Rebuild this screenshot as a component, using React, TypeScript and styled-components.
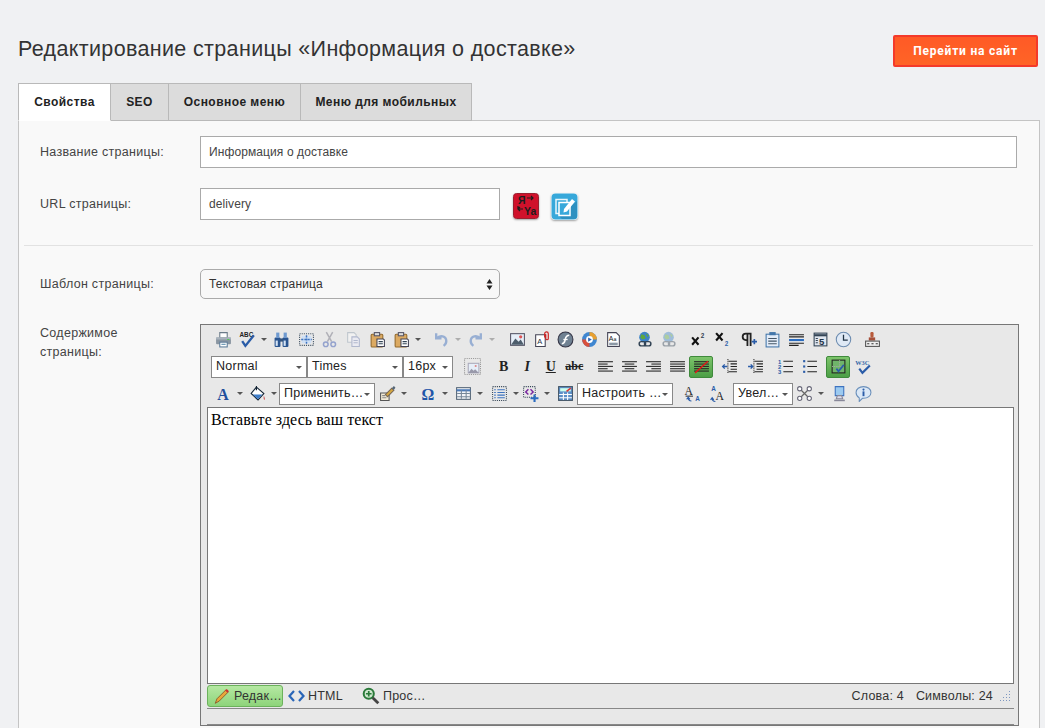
import React from 'react';
import styled, { createGlobalStyle } from 'styled-components';

const Global = createGlobalStyle`
  html, body { margin: 0; padding: 0; height: 100%; overflow: hidden; background: #f0f1f3; }
  body { font-family: "Liberation Sans", Arial, sans-serif; color: #333; }
  #root { height: 100%; }
`;

const Page = styled.div`
  height: 100vh;
  box-sizing: border-box;
  padding: 35px 5px 0 18px;
  display: flex;
  flex-direction: column;
  overflow: hidden;
`;

const Header = styled.header`
  display: flex;
  align-items: flex-start;
  justify-content: space-between;
  height: 48px;
  padding-right: 2px;
  flex-shrink: 0;
`;

const Title = styled.h1`
  margin: 0;
  font-size: 21.5px;
  line-height: 28px;
  font-weight: 400;
  letter-spacing: 0.35px;
  color: #333;
`;

const GoButton = styled.a`
  display: flex;
  align-items: center;
  justify-content: center;
  width: 145px;
  height: 32px;
  box-sizing: border-box;
  background: linear-gradient(#ff5a26, #ff6426);
  border: 2px solid #f43a2a;
  border-radius: 2px;
  color: #fff;
  font-family: Roboto, "Liberation Sans", sans-serif;
  font-size: 12px;
  font-weight: 700;
  letter-spacing: 0.8px;
`;

const Tabs = styled.nav`
  display: flex;
  height: 38px;
  flex-shrink: 0;
  position: relative;
  z-index: 1;
  margin-bottom: -1px;
`;

const Tab = styled.div<{ $active?: boolean; $w: number }>`
  width: ${p => p.$w}px;
  box-sizing: border-box;
  display: flex;
  align-items: center;
  justify-content: center;
  border: 1px solid #b9b9b9;
  border-left-width: ${p => (p.$active ? 1 : 0)}px;
  border-bottom-color: ${p => (p.$active ? '#fff' : '#b9b9b9')};
  background: ${p => (p.$active ? '#fff' : '#dcdcdc')};
  font-size: 12px;
  font-weight: 700;
  letter-spacing: 0.45px;
  color: #222;
`;

const Panel = styled.main`
  flex: 1;
  background: #f9f9f9;
  border: 1px solid #c4c4c4;
  border-bottom: 0;
  padding: 15px 6px 0 5px;
  min-height: 0;
`;

const Row = styled.div<{ $mb: number; $center?: boolean }>`
  display: flex;
  align-items: ${p => (p.$center ? 'center' : 'flex-start')};
  padding-left: 16px;
  margin-bottom: ${p => p.$mb}px;
`;

const Label = styled.label`
  width: 160px;
  flex-shrink: 0;
  font-size: 12.5px;
  line-height: 19px;
  letter-spacing: 0.3px;
  color: #444;
`;

const LabelText = styled.span`
  display: block;
  width: 110px;
`;

const Field = styled.input<{ $w: number }>`
  width: ${p => p.$w}px;
  height: 32px;
  box-sizing: border-box;
  border: 1px solid #aaa;
  background: #fff;
  padding: 0 8px;
  font-family: inherit;
  font-size: 12px;
  letter-spacing: 0.1px;
  color: #444;
  outline: none;
`;

const IconLink = styled.span<{ $ml: number }>`
  display: flex;
  margin-left: ${p => p.$ml}px;
  margin-top: 4px;
  border-radius: 4px;
  box-shadow: 0 1px 2px rgba(0, 0, 0, 0.35);
`;

const Divider = styled.hr`
  border: 0;
  border-top: 1px solid #e2e2e2;
  margin: 0 0 23px 0;
`;

const SelectBox = styled.div`
  width: 300px;
  height: 30px;
  box-sizing: border-box;
  display: flex;
  align-items: center;
  justify-content: space-between;
  padding: 0 6px 0 8px;
  border: 1px solid #aaa;
  border-radius: 5px;
  background: #f8f8f8;
  font-size: 12px;
  letter-spacing: 0.15px;
  color: #333;
`;

const Editor = styled.div`
  width: 819px;
  height: 402px;
  box-sizing: border-box;
  border: 1px solid #777;
  background: #e8e8e8;
  padding: 0 4px 1px 6px;
  display: flex;
  flex-direction: column;
  flex-shrink: 0;
`;

const ToolRow = styled.div`
  display: flex;
  align-items: center;
  height: 27px;
  flex-shrink: 0;
`;

const ToolRows = styled.div`
  padding: 1px 0 0 4px;
  height: 81px;
  flex-shrink: 0;
`;

const ToolBtn = styled.span<{ $ml?: number; $on?: boolean; $off?: boolean }>`
  width: 24px;
  height: 22px;
  box-sizing: border-box;
  display: flex;
  align-items: center;
  justify-content: center;
  flex-shrink: 0;
  margin-left: ${p => p.$ml || 0}px;
  opacity: ${p => (p.$off ? 0.42 : 1)};
  border-radius: 2px;
  ${p => p.$on && 'background: linear-gradient(#7cc46a, #4c9f46); border: 1px solid #3f8a3c;'}
`;

const Drop = styled.span<{ $off?: boolean }>`
  width: 10px;
  height: 22px;
  flex-shrink: 0;
  display: flex;
  align-items: center;
  justify-content: center;
  opacity: ${p => (p.$off ? 0.4 : 1)};
  &::after {
    content: '';
    border: 3px solid transparent;
    border-top: 3px solid #555;
    border-bottom: 0;
  }
`;

const ToolSelect = styled.span<{ $w: number; $ml?: number }>`
  width: ${p => p.$w}px;
  height: 22px;
  box-sizing: border-box;
  margin-left: ${p => p.$ml || 0}px;
  flex-shrink: 0;
  display: flex;
  align-items: center;
  justify-content: space-between;
  padding: 0 4px 2px;
  background: #fff;
  border: 1px solid #888;
  font-size: 12.5px;
  letter-spacing: 0.25px;
  color: #222;
  white-space: nowrap;
  &::after {
    content: '';
    flex-shrink: 0;
    border: 3px solid transparent;
    border-top: 3px solid #555;
    border-bottom: 0;
    margin-top: 3px;
  }
`;

const Content = styled.div`
  height: 277px;
  box-sizing: border-box;
  flex-shrink: 0;
  background: #fff;
  border: 1px solid #777;
  padding: 3px 3px;
  font-family: "Liberation Serif", "Times New Roman", serif;
  font-size: 16px;
  line-height: 18px;
  letter-spacing: 0.05px;
  color: #000;
`;

const StatusBar = styled.div`
  height: 25px;
  flex-shrink: 0;
  box-sizing: border-box;
  border-bottom: 1px solid #888;
  display: flex;
  align-items: center;
  justify-content: space-between;
  font-size: 12.5px;
  letter-spacing: 0.2px;
  color: #333;
`;

const Modes = styled.div`
  display: flex;
  align-items: center;
  height: 100%;
`;

const Mode = styled.span<{ $w: number; $on?: boolean; $pl?: number }>`
  width: ${p => p.$w}px;
  height: 22px;
  box-sizing: border-box;
  display: flex;
  align-items: center;
  gap: 3px;
  padding-left: ${p => p.$pl ?? 5}px;
  border-radius: 3px;
  white-space: nowrap;
  ${p => p.$on && 'background: linear-gradient(#b5e8a2, #8ed47b); border: 1px solid #6cb25c;'}
`;

const Counts = styled.div`
  display: flex;
  align-items: center;
  gap: 12px;
  padding-right: 3px;
`;

const Grip = styled.span`
  width: 12px;
  height: 12px;
  display: flex;
  margin-left: -6px;
`;

const BottomStrip = styled.div`
  height: 15px;
  flex-shrink: 0;
  border-bottom: 1px solid #888;
`;

const FaceBtn = styled.span<{ $i?: boolean; $u?: boolean; $s?: boolean; $ml?: number }>`
  width: 23.5px;
  height: 22px;
  flex-shrink: 0;
  display: flex;
  align-items: center;
  justify-content: center;
  margin-left: ${p => p.$ml || 0}px;
  font-family: "Liberation Serif", serif;
  font-size: ${p => (p.$s ? 12 : 14)}px;
  font-weight: 700;
  font-style: ${p => (p.$i ? 'italic' : 'normal')};
  text-decoration: ${p => (p.$u ? 'underline' : p.$s ? 'line-through' : 'none')};
  color: #222;
`;

const I = ({ children, s = 17 }: { children: React.ReactNode; s?: number }) => (
  <svg width={s} height={s} viewBox="0 0 16 16" fill="none">{children}</svg>
);

const lines = (ys: [number, number][], y0: number, step: number, c = '#222') =>
  ys.map(([a, b], i) => <path key={i} d={`M${a} ${y0 + i * step + 0.5}H${b}`} stroke={c} />);

const icons: Record<string, React.ReactNode> = {
  print: <><path d="M4.5 1.5h7v5h-7z" fill="#fff" stroke="#6a7a88" /><rect x="1" y="6" width="14" height="6.5" rx="1" fill="#8a96a2" /><rect x="1" y="6" width="14" height="2" fill="#a9b3bd" /><rect x="4.5" y="10.5" width="7" height="4.5" fill="#fff" stroke="#5a7a98" /><path d="M6 12.500h4" stroke="#58a" /><rect x="11.5" y="7.5" width="2" height="1" fill="#5c5" /></>,
  spell: <><text x="0.500" y="6" fontSize="6" fontWeight="700" fill="#222" fontFamily="Liberation Sans">ABC</text><path d="M3 9.500l3 4.500 8-10" stroke="#2a5ca8" strokeWidth="2.200" /></>,
  find: <><rect x="1.500" y="6" width="5.500" height="9" rx="1" fill="#2a5590" /><rect x="9" y="6" width="5.500" height="9" rx="1" fill="#2a5590" /><rect x="3" y="1.500" width="3" height="5" fill="#6f9ad0" /><rect x="10" y="1.500" width="3" height="5" fill="#6f9ad0" /><rect x="6.500" y="7" width="3" height="3" fill="#35557f" /><rect x="2.500" y="9" width="2" height="5" fill="#d5e4f5" /><rect x="10" y="9" width="2" height="5" fill="#d5e4f5" /></>,
  select: <><rect x="1.500" y="2.500" width="13" height="11" stroke="#456" strokeDasharray="1 1" /><rect x="3.500" y="4.500" width="9" height="7" fill="#cfe0f5" /><path d="M8 4v8M3 8h10" stroke="#3d73c0" strokeWidth="1.400" strokeDasharray="2 1" /></>,
  cut: <><path d="M5 1l5 9M11 1L6 10" stroke="#667" strokeWidth="1.400" /><circle cx="4.500" cy="12.500" r="2.200" stroke="#24a" strokeWidth="1.400" /><circle cx="11.500" cy="12.500" r="2.200" stroke="#24a" strokeWidth="1.400" /></>,
  copy: <><path d="M2.500 1.500h6l2 2v7h-8z" fill="#fff" stroke="#89a" /><path d="M6.500 5.500h5l2 2v7h-7z" fill="#eef" stroke="#67a" /><path d="M8 9h4M8 11h4" stroke="#67a" /></>,
  paste: <><rect x="2" y="3" width="11" height="12" rx="1" fill="#dcaa62" stroke="#946b2c" /><rect x="5" y="1.500" width="5" height="3" fill="#ddd" stroke="#556" /><path d="M7.500 7.500h6l1 1v6h-7z" fill="#fff" stroke="#445" /><path d="M9 10h4M9 12h4" stroke="#345" /></>,
  undo: <path d="M3 2v5h5M3.500 7c3-3.500 9-2.500 9 2.500 0 2-1 3.500-2.500 4.500" stroke="#2c62b8" strokeWidth="2.200" />,
  redo: <path d="M13 2v5H8M12.500 7c-3-3.500-9-2.500-9 2.500 0 2 1 3.500 2.500 4.500" stroke="#2c62b8" strokeWidth="2.200" />,
  image: <><rect x="1.500" y="2.500" width="13" height="11" fill="#e6eef8" stroke="#556" /><path d="M2 13l4-6 3 3 2-2 3 5z" fill="#4d5d6c" /><circle cx="11" cy="5.500" r="1.500" fill="#d55" /></>,
  attach: <><path d="M2.500 3.500h9v11h-9z" fill="#fff" stroke="#445" /><text x="4" y="12" fontSize="7" fill="#234" fontFamily="Liberation Sans">A</text><path d="M11 6V2.500a1.700 1.700 0 013.400 0V7a1.200 1.200 0 01-2.400 0V3" stroke="#c22" strokeWidth="1.100" /></>,
  flash: <><circle cx="8" cy="8" r="7" fill="#6f8192" stroke="#334" /><path d="M11.500 4C8 4 8 7 7.500 9S6 12 4.500 12" stroke="#fff" strokeWidth="1.500" /><path d="M6 8h4" stroke="#fff" strokeWidth="1.200" /></>,
  media: <><circle cx="8" cy="8" r="7" fill="#3f86d0" /><path d="M8 1a7 7 0 017 7H11a3 3 0 00-3-3z" fill="#e8a030" /><path d="M1 8a7 7 0 007 7v-4a3 3 0 01-3-3z" fill="#d9503c" /><circle cx="8" cy="8" r="3.200" fill="#fff" /><path d="M6.700 6v4l3.500-2z" fill="#2f66b8" /></>,
  doc: <><path d="M2.500 1.500h8l3 3v10h-11z" fill="#fff" stroke="#445" /><text x="3.500" y="9" fontSize="6.500" fill="#222" fontFamily="Liberation Sans">A</text><text x="8" y="9" fontSize="5" fill="#222" fontFamily="Liberation Sans">a</text><path d="M4 11.500h8M4 13h8" stroke="#678" /></>,
  link: <><circle cx="8" cy="5.800" r="5" fill="#3d83c8" /><path d="M5 3l3 1 1 3-3 1-2-2z" fill="#5ea83e" /><path d="M9 2l3 2-1 2z" fill="#5ea83e" /><rect x="3" y="10" width="6" height="4" rx="2" stroke="#345" strokeWidth="1.400" /><rect x="8" y="10" width="6" height="4" rx="2" stroke="#345" strokeWidth="1.400" /></>,
  sup: <><path d="M2 6l6 7M8 6l-6 7" stroke="#111" strokeWidth="2" /><text x="10" y="7" fontSize="6" fontWeight="700" fill="#345" fontFamily="Liberation Sans">2</text></>,
  sub: <><path d="M2 2l6 7M8 2L2 9" stroke="#111" strokeWidth="2" /><text x="10" y="14" fontSize="6" fontWeight="700" fill="#36a" fontFamily="Liberation Sans">2</text></>,
  para: <><path d="M7 14V2.500M10 14V2.500H5.500a3 3 0 000 6H7" stroke="#222" strokeWidth="1.700" /><path d="M11 10h5M13.500 7.500v5" stroke="#2a5ca8" strokeWidth="1.600" /></>,
  tpl: <><rect x="2" y="3" width="12" height="12" fill="#e3ecf8" stroke="#47a" /><rect x="5" y="1" width="6" height="3" fill="#47a" /><path d="M4 7h8M4 9.500h8M4 12h8" stroke="#456" /></>,
  rule: <><path d="M1 3.500h14M1 5.500h14" stroke="#222" /><path d="M1 8.500h14" stroke="#2a6cc0" strokeWidth="2" /><path d="M1 11.500h14M1 13.500h9" stroke="#222" /></>,
  page: <><rect x="2" y="2" width="12" height="12" fill="#dfe5ee" stroke="#345" /><path d="M2 4h12" stroke="#345" strokeWidth="2" /><text x="6.500" y="13" fontSize="9" fontWeight="700" fill="#234" fontFamily="Liberation Sans">5</text><path d="M3.500 7h2M3.500 9h2M3.500 11h2" stroke="#345" /></>,
  clock: <><circle cx="8" cy="8" r="6.800" fill="#dfe9f5" stroke="#6d8cb0" /><path d="M8 3.500V8.500H12" stroke="#234" strokeWidth="1.200" /></>,
  stamp: <><rect x="6" y="1" width="3" height="5" rx="1" fill="#b85a3a" /><rect x="4.500" y="6" width="6" height="3" fill="#a6503a" /><rect x="1.500" y="9.500" width="13" height="5" fill="#eee" stroke="#555" /><path d="M3 12h2M7 12h2M11 12h2" stroke="#333" /></>,
  placeholder: <><rect x="0.500" y="0.500" width="15" height="15" stroke="#999" strokeDasharray="1 1" /><rect x="4" y="5" width="10" height="9" fill="#e6eef8" stroke="#aab" /><path d="M4 14l3-4 2 2 1.500-1.500L14 14z" fill="#99a" /><circle cx="11" cy="7.500" r="1" fill="#d88" /></>,
  left: <>{lines([[1, 15], [1, 10], [1, 15], [1, 10], [1, 15]], 3, 2.200)}</>,
  center: <>{lines([[1, 15], [3.500, 12.500], [1, 15], [3.500, 12.500], [1, 15]], 3, 2.200)}</>,
  right: <>{lines([[1, 15], [6, 15], [1, 15], [6, 15], [1, 15]], 3, 2.200)}</>,
  justify: <>{lines([[1, 15], [1, 15], [1, 15], [1, 15], [1, 15]], 3, 2.200)}</>,
  blocks: <>{lines([[1, 15], [1, 15], [1, 15], [1, 15], [1, 15]], 3, 2.200)}<path d="M2 14L14 3" stroke="#e01818" strokeWidth="1.300" /></>,
  outdent: <><path d="M7 3h8M9 5.500h6M9 8h6M9 10.500h6M7 13h8" stroke="#222" /><path d="M6 8H1.500M3.500 6L1.500 8l2 2" stroke="#2a5ca8" strokeWidth="1.200" /><path d="M6.500 1v14" stroke="#333" strokeDasharray="1 1" /></>,
  indent: <><path d="M7 3h8M9 5.500h6M9 8h6M9 10.500h6M7 13h8" stroke="#222" /><path d="M1 8h4.500M3.500 6l2 2-2 2" stroke="#2a5ca8" strokeWidth="1.200" /><path d="M6.500 1v14" stroke="#333" strokeDasharray="1 1" /></>,
  ol: <><text x="1" y="5.500" fontSize="5.500" fontWeight="700" fill="#2a5ca8" fontFamily="Liberation Sans">1</text><text x="1" y="10.500" fontSize="5.500" fontWeight="700" fill="#2a5ca8" fontFamily="Liberation Sans">2</text><text x="1" y="15.500" fontSize="5.500" fontWeight="700" fill="#2a5ca8" fontFamily="Liberation Sans">3</text><path d="M6 3h9M6 8h9M6 13h9" stroke="#222" /></>,
  ul: <><rect x="2" y="2" width="2" height="2" fill="#2a5ca8" /><rect x="2" y="7" width="2" height="2" fill="#2a5ca8" /><rect x="2" y="12" width="2" height="2" fill="#2a5ca8" /><path d="M6 3h9M6 8h9M6 13h9" stroke="#222" /></>,
  preview: <><rect x="2" y="2" width="12" height="12" fill="#6fb46a" stroke="#222" /><path d="M9 2v6M2 8h12" stroke="#aaa" strokeDasharray="1 1" /><path d="M6 10l2 2.500 5-6" stroke="#2a5ca8" strokeWidth="1.600" /></>,
  w3c: <><text x="0.200" y="6.500" fontSize="6" fontWeight="700" fill="#3a6aa8" fontFamily="Liberation Serif">W3C</text><path d="M4 10l3 4 7-7" stroke="#2a5ca8" strokeWidth="2" /></>,
  color: <text x="2" y="14" fontSize="15" fontWeight="700" fill="#1f4f9c" fontFamily="Liberation Serif">A</text>,
  fill: <><path d="M7 2l7 6-5.500 6L2 8z" fill="#fff" stroke="#123" /><path d="M3.500 9h9l-4 4.500z" fill="#3d7cc8" /><path d="M7 5V1" stroke="#123" /><path d="M14 10c1 2 1.500 3 .5 4-1-1-1-2-.5-4" fill="#c66" /></>,
  brush: <><path d="M1.500 7.500h8v7h-8z" fill="#f4ecd8" stroke="#555" /><path d="M6 9l6-6 2 2-6 6z" fill="#d6a840" stroke="#765" /><path d="M12 3l2-2 1.500 1.500-1.500 2z" fill="#567" /><path d="M3 10h3M3 12h4" stroke="#888" /></>,
  omega: <text x="1.500" y="14" fontSize="15" fontWeight="700" fill="#1f55a8" fontFamily="Liberation Serif">Ω</text>,
  table: <><rect x="1.500" y="2.500" width="13" height="11" fill="#f2f4f8" stroke="#567" /><path d="M1.500 5h13" stroke="#4a7ab8" strokeWidth="2" /><path d="M6 5v8M10.500 5v8M2 8h12M2 11h12" stroke="#789" /></>,
  list: <><rect x="1.500" y="1.500" width="13" height="13" stroke="#345" strokeDasharray="1 1" /><path d="M6 4.500h7M6 7h7M6 9.500h7M6 12h7" stroke="#3d73c0" /><path d="M3 4.500h1.500M3 7h1.500M3 9.500h1.500M3 12h1.500" stroke="#3d73c0" /></>,
  addtag: <><rect x="1.500" y="1.500" width="11" height="10" stroke="#345" strokeDasharray="1 1" /><path d="M6 4L3.500 6.500 6 9M8 4l2.500 2.500L8 9" stroke="#7a2aa0" strokeWidth="1.400" /><path d="M8 12.500h7.500M11.800 9v7" stroke="#2a6cc0" strokeWidth="2" /></>,
  chart: <><rect x="1.500" y="1.500" width="13" height="13" fill="#5d90c8" stroke="#456" /><rect x="3" y="3" width="10" height="3" fill="#cfe" /><path d="M2 9h12M2 12h12M6 7v7M10 7v7" stroke="#fff" /><path d="M9 6l4-3" stroke="#d33" strokeWidth="1.500" /></>,
  ltr: <><text x="0.500" y="9" fontSize="11" fill="#222" fontFamily="Liberation Serif">A</text><path d="M1.500 10.500h7" stroke="#333" /><path d="M7 15c-2 0-3-1-3-3M2.500 13.500L4 11.500l1.500 2" stroke="#2a5ca8" /><text x="10.500" y="15" fontSize="6" fill="#2a5ca8" fontWeight="700" fontFamily="Liberation Sans">A</text></>,
  rtl: <><text x="6" y="14.500" fontSize="11" fill="#222" fontFamily="Liberation Serif">A</text><text x="2" y="6" fontSize="6" fill="#2a5ca8" fontWeight="700" fontFamily="Liberation Sans">A</text><path d="M6 15.500c-2 0-3-1-3-3M1.500 14L3 12l1.500 2" stroke="#2a5ca8" /></>,
  net: <><path d="M4 4l4 4-4 4M12 4L8 8l4 4" stroke="#666" strokeWidth="1.200" /><circle cx="3.500" cy="3.500" r="2" fill="#fff" stroke="#667" /><circle cx="12.500" cy="3.500" r="2" fill="#fff" stroke="#667" /><circle cx="3.500" cy="12.500" r="2" fill="#fff" stroke="#667" /><circle cx="12.500" cy="12.500" r="2" fill="#fff" stroke="#667" /></>,
  user: <><path d="M4 1.500h8v8.500H4z" fill="#9ccaf0" stroke="#3d73c0" /><path d="M6 10h4l1 3H5z" fill="#dde" stroke="#889" /><path d="M3 14.500h10" stroke="#889" strokeWidth="1.500" /></>,
  info: <><path d="M8 1.500c4 0 7 2.300 7 5.500s-3 5.500-7 5.500H7l-3 3v-3.400C2.200 11 1 9.200 1 7c0-3.200 3-5.500 7-5.500z" fill="#dbe8f6" stroke="#6a8fba" /><circle cx="8" cy="4.300" r="1" fill="#2a5ca8" /><path d="M8 6v4.500" stroke="#2a5ca8" strokeWidth="1.800" /></>,
};

const Tool = ({ n, ml, on, off, drop }: { n: string; ml?: number; on?: boolean; off?: boolean; drop?: boolean }) => (
  <>
    <ToolBtn $ml={ml} $on={on} $off={off}><I>{icons[n]}</I></ToolBtn>
    {drop && <Drop $off={off} />}
  </>
);

export default function App() {
  return (
    <Page>
      <Global />
      <Header>
        <Title>Редактирование страницы «Информация о доставке»</Title>
        <GoButton>Перейти на сайт</GoButton>
      </Header>
      <Tabs>
        <Tab $active $w={93}>Свойства</Tab>
        <Tab $w={58}>SEO</Tab>
        <Tab $w={132}>Основное меню</Tab>
        <Tab $w={171}>Меню для мобильных</Tab>
      </Tabs>
      <Panel>
        <Row $mb={20} $center>
          <Label>Название страницы:</Label>
          <Field $w={817} readOnly value="Информация о доставке" />
        </Row>
        <Row $mb={25} $center>
          <Label>URL страницы:</Label>
          <Field $w={300} readOnly value="delivery" />
          <IconLink $ml={13}>
            <svg width="26" height="26" viewBox="0 0 26 26">
              <rect x="0.500" y="0.500" width="25" height="25" rx="3" fill="#d0112b" stroke="#9a2030" />
              <text x="5" y="11" fontSize="10.500" fontWeight="700" fill="#1c1c1c" fontFamily="Liberation Sans">Я</text>
              <path d="M14 5h6M18 3l2 2-2 2" stroke="#1c1c1c" strokeWidth="1.200" fill="none" />
              <path d="M5 13v3h5M7 14l-2 2 2 2" stroke="#1c1c1c" strokeWidth="1.200" fill="none" />
              <text x="11" y="22" fontSize="10.500" fontWeight="700" fill="#1c1c1c" fontFamily="Liberation Sans">Ya</text>
            </svg>
          </IconLink>
          <IconLink $ml={12}>
            <svg width="27" height="27" viewBox="0 0 27 27">
              <rect x="0.500" y="0.500" width="26" height="26" rx="4" fill="#37a8da" />
              <path d="M8 23l18-15v15a3 3 0 01-3 3H11z" fill="#2d90c0" />
              <rect x="5" y="6.500" width="11" height="14" fill="none" stroke="#e8f5fb" strokeWidth="1.500" />
              <rect x="8" y="9.500" width="11" height="13" fill="#37a8da" stroke="#fff" strokeWidth="1.500" />
              <path d="M13 16l8-10 3 2.500-8 10-3.500 1z" fill="#fff" />
            </svg>
          </IconLink>
        </Row>
        <Divider />
        <Row $mb={25} $center>
          <Label>Шаблон страницы:</Label>
          <SelectBox>
            Текстовая страница
            <svg width="7" height="11" viewBox="0 0 7 11"><path d="M3.500 0L6.500 4.500H.5zM3.500 11L.5 6.500h6z" fill="#222" /></svg>
          </SelectBox>
        </Row>
        <Row $mb={0}>
          <Label><LabelText>Содержимое страницы:</LabelText></Label>
          <Editor>
            <ToolRows>
              <ToolRow>
                <Tool n="print" />
                <Tool n="spell" drop />
                <Tool n="find" />
                <Tool n="select" ml={1} />
                <Tool n="cut" off ml={-1} />
                <Tool n="copy" off />
                <Tool n="paste" />
                <Tool n="paste" drop />
                <Tool n="undo" off drop ml={6} />
                <Tool n="redo" off drop />
                <Tool n="image" ml={8} />
                <Tool n="attach" />
                <Tool n="flash" />
                <Tool n="media" />
                <Tool n="doc" />
                <Tool n="link" ml={7} />
                <Tool n="link" off />
                <Tool n="sup" ml={6} />
                <Tool n="sub" />
                <Tool n="para" ml={2} />
                <Tool n="tpl" />
                <Tool n="rule" />
                <Tool n="page" />
                <Tool n="clock" ml={-1} />
                <Tool n="stamp" ml={5} />
              </ToolRow>
              <ToolRow>
                <ToolSelect $w={96}>Normal</ToolSelect>
                <ToolSelect $w={96}>Times</ToolSelect>
                <ToolSelect $w={50}>16px</ToolSelect>
                <Tool n="placeholder" ml={7} />
                <FaceBtn $ml={8}>B</FaceBtn>
                <FaceBtn $i>I</FaceBtn>
                <FaceBtn $u>U</FaceBtn>
                <FaceBtn $s>abc</FaceBtn>
                <Tool n="left" ml={7} />
                <Tool n="center" />
                <Tool n="right" />
                <Tool n="justify" />
                <Tool n="blocks" on />
                <Tool n="outdent" ml={4} />
                <Tool n="indent" ml={2} />
                <Tool n="ol" ml={6} />
                <Tool n="ul" />
                <Tool n="preview" on ml={5} />
                <Tool n="w3c" ml={1} />
              </ToolRow>
              <ToolRow>
                <Tool n="color" drop />
                <Tool n="fill" drop />
                <ToolSelect $w={96}>Применить…</ToolSelect>
                <Tool n="brush" drop />
                <Tool n="omega" drop ml={7} />
                <Tool n="table" drop ml={1} />
                <Tool n="list" drop ml={2} />
                <Tool n="addtag" drop ml={-3} />
                <Tool n="chart" ml={1} />
                <ToolSelect $w={96}>Настроить …</ToolSelect>
                <Tool n="ltr" ml={7} />
                <Tool n="rtl" ml={1} />
                <ToolSelect $w={60} $ml={4}>Увел…</ToolSelect>
                <Tool n="net" ml={-1} />
                <Drop />
                <Tool n="user" ml={1} />
                <Tool n="info" />
              </ToolRow>
            </ToolRows>
            <Content>Вставьте здесь ваш текст</Content>
            <StatusBar>
              <Modes>
                <Mode $w={76} $on>
                  <svg width="18" height="18" viewBox="0 0 16 16" fill="none"><path d="M2 14.500l1.500-4L11.500 2.500l2 2-8 8z" fill="#e8a83a" stroke="#8a5a2a" strokeWidth="0.800" /><path d="M11.500 2.500l2 2" stroke="#c33" strokeWidth="2" /></svg>
                  Редак…
                </Mode>
                <Mode $w={76}>
                  <svg width="17" height="14" viewBox="0 0 17 14" fill="none"><path d="M6 2L1.500 7 6 12M11 2l4.500 5L11 12" stroke="#2a66b8" strokeWidth="2.200" /></svg>
                  HTML
                </Mode>
                <Mode $w={76} $pl={3}>
                  <svg width="18" height="18" viewBox="0 0 16 16" fill="none"><circle cx="6" cy="6" r="4.500" fill="#cfe8cf" stroke="#2a7a3a" strokeWidth="1.800" /><path d="M6 3.500v5M3.500 6h5" stroke="#2a7a3a" strokeWidth="1.500" /><path d="M9.500 9.500l5 5" stroke="#444" strokeWidth="2.500" /></svg>
                  Прос…
                </Mode>
              </Modes>
              <Counts>
                <span>Слова: 4</span>
                <span>Символы: 24</span>
                <Grip>
                  <svg width="12" height="12" viewBox="0 0 12 12"><path d="M10 1h1v1h-1zM7 4h1v1H7zM10 4h1v1h-1zM4 7h1v1H4zM7 7h1v1H7zM10 7h1v1h-1zM1 10h1v1H1zM4 10h1v1H4zM7 10h1v1H7zM10 10h1v1h-1z" fill="#7d96c0" /></svg>
                </Grip>
              </Counts>
            </StatusBar>
            <BottomStrip />
          </Editor>
        </Row>
      </Panel>
    </Page>
  );
}
